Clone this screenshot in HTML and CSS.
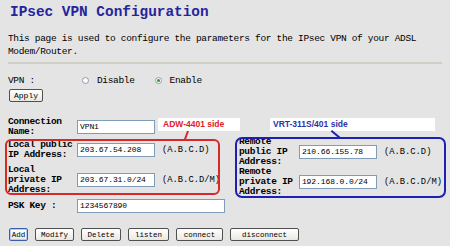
FILE: index.html
```html
<!DOCTYPE html>
<html lang="en">
<head>
  <meta charset="UTF-8" />
  <title>IPsec VPN Configuration</title>
  <link rel="stylesheet" href="styles.css">
</head>
<body>
<div class="page">
  <h1 class="title">IPsec VPN Configuration</h1>
  <p class="desc">This page is used to configure the parameters for the IPsec VPN of your ADSL Modem/Router.</p>
  <hr class="sep">

  <div class="vpn-row">
    <span class="vpn-label">VPN :</span>
    <label class="radio"><span class="dot"></span>Disable</label>
    <label class="radio"><span class="dot on"></span>Enable</label>
  </div>
  <button class="btn btn-apply">Apply</button>

  <div class="form">
    <div class="row conn-row">
      <div class="lbl">Connection<br>Name:</div>
      <div class="field">VPN1</div>
      <div class="note note-local">ADW-4401 side</div>
      <div class="note note-remote">VRT-311S/401 side</div>
    </div>

    <div class="pair">
      <div class="side local">
        <div class="frame frame-local"></div>
        <div class="row">
          <div class="lbl">Local public<br>IP Address:</div>
          <div class="field">203.67.54.208</div>
          <span class="hint">(A.B.C.D)</span>
        </div>
        <div class="row row-gap">
          <div class="lbl">Local<br>private IP<br>Address:</div>
          <div class="field">203.67.31.0/24</div>
          <span class="hint">(A.B.C.D/M)</span>
        </div>
      </div>
      <div class="side remote">
        <div class="frame frame-remote"></div>
        <div class="row">
          <div class="lbl lbl-r">Remote<br>public IP<br>Address:</div>
          <div class="field">210.66.155.78</div>
          <span class="hint">(A.B.C.D)</span>
        </div>
        <div class="row">
          <div class="lbl lbl-r">Remote<br>private IP<br>Address:</div>
          <div class="field">192.168.0.0/24</div>
          <span class="hint">(A.B.C.D/M)</span>
        </div>
      </div>
    </div>

    <div class="row psk-row">
      <div class="lbl">PSK Key :</div>
      <div class="field field-psk">1234567890</div>
    </div>
  </div>

  <div class="actions">
    <button class="btn btn-add">Add</button>
    <button class="btn btn-modify">Modify</button>
    <button class="btn btn-delete">Delete</button>
    <button class="btn btn-listen">listen</button>
    <button class="btn btn-connect">connect</button>
    <button class="btn btn-disconnect">disconnect</button>
  </div>
</div>
</body>
</html>
```

FILE: styles.css
```css
body {
  margin: 0;
  background: #e4e4e4;
  font-family: "Liberation Mono", monospace;
  color: #000;
}
.page { padding: 0 8px; }

.title {
  margin: 0;
  padding: 3px 0 0 2px;
  font-size: 14.4px;
  line-height: 18px;
  font-weight: bold;
  color: #24249c;
}
.desc {
  margin: 11px 0 0;
  font-size: 9.5px;
  letter-spacing: -0.33px;
  line-height: 13px;
}
.sep {
  margin: 4px 0 0;
  height: 0;
  border: 0;
  border-top: 2px solid #cfcfc6;
}

.vpn-row {
  display: flex;
  align-items: center;
  height: 14px;
  margin-top: 9px;
  font-size: 9.5px;
  letter-spacing: -0.33px;
}
.vpn-label { width: 74px; }
.radio {
  display: flex;
  align-items: center;
  margin-right: 20px;
}
.dot {
  width: 7px;
  height: 7px;
  box-sizing: border-box;
  border: 1px solid #8c9cb4;
  border-radius: 50%;
  background: #fbfbfb;
  margin-right: 8px;
  position: relative;
}
.dot.on::after {
  content: "";
  position: absolute;
  left: 1px; top: 1px;
  width: 3px; height: 3px;
  border-radius: 50%;
  background: #2a9a2a;
}

.btn {
  height: 13px;
  padding: 0;
  box-sizing: border-box;
  border: 1px solid #505050;
  border-radius: 2px;
  background: linear-gradient(#ffffff, #e9e8e2);
  font-family: "Liberation Mono", monospace;
  font-size: 7.5px;
  color: #000;
}
.btn-apply {
  display: block;
  width: 34px;
  margin: 2px 0 0 1px;
  font-size: 8px;
}

.form { margin-top: 15px; }
.row {
  display: flex;
  align-items: center;
}
.lbl {
  width: 69px;
  flex: none;
  font-weight: bold;
  font-size: 9.5px;
  letter-spacing: -0.33px;
  line-height: 10px;
}
.lbl-r { width: 60px; }
.field {
  width: 78px;
  height: 14px;
  flex: none;
  box-sizing: border-box;
  border: 1px solid #7f9db9;
  background: #fff;
  padding: 0 2px;
  font-size: 8px;
  line-height: 12px;
  letter-spacing: -0.1px;
  white-space: nowrap;
}
.field-psk { width: 148px; }
.hint {
  margin-left: 7px;
  font-size: 8.8px;
  white-space: nowrap;
}

.note {
  align-self: flex-start;
  margin-top: 1px;
  height: 13px;
  background: #fff;
  font-family: "Liberation Sans", Arial, sans-serif;
  font-weight: bold;
  font-size: 8.5px;
  line-height: 13px;
  position: relative;
}
.note-local {
  width: 77px;
  margin-left: 3px;
  padding-left: 5px;
  color: #e0202a;
}
.note-local::after {
  content: "";
  position: absolute;
  left: 29px; top: 13px;
  width: 2px; height: 9px;
  background: #d42a2a;
  transform: rotate(20deg);
  transform-origin: 50% 0;
}
.note-remote {
  width: 162px;
  margin-left: 30px;
  padding-left: 3px;
  color: #2a34a8;
}
.note-remote::after {
  content: "";
  position: absolute;
  left: 62px; top: 12px;
  width: 11px; height: 2px;
  background: #1c20b4;
  transform: rotate(40deg);
  transform-origin: 0 0;
}

.pair { display: flex; }
.side { position: relative; }
.local { width: 232px; padding-top: 3px; }
.remote { flex: 1; }
.row-gap { margin-top: 5px; }

.frame {
  position: absolute;
  box-sizing: border-box;
  border: 2px solid;
  pointer-events: none;
}
.frame-local {
  left: -3px; top: 2px;
  width: 215px; height: 56px;
  border-color: #d42a2a;
  border-radius: 6px;
}
.frame-remote {
  left: -4px; top: 0;
  width: 211px; height: 61px;
  border-color: #1c20b4;
  border-radius: 7px;
}

.psk-row { margin-top: 2px; height: 14px; }

.actions {
  display: flex;
  gap: 7px;
  margin: 15px 0 0 1px;
}
.btn-add { width: 19px; border-color: #3b5ea8; box-shadow: inset 0 0 0 1px #b8cdf0; }
.btn-modify { width: 39px; }
.btn-delete { width: 40px; }
.btn-listen { width: 41px; }
.btn-connect { width: 47px; }
.btn-disconnect { width: 69px; }
```
